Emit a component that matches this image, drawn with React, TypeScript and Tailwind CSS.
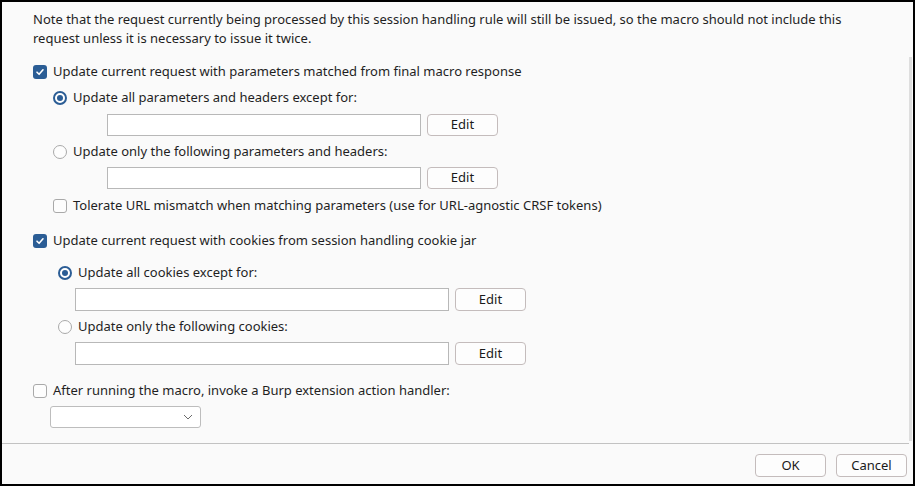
import React from 'react';

const font = { fontFamily: '"Noto Sans", "Open Sans", sans-serif' };

const CheckBox: React.FC<{ checked?: boolean }> = ({ checked }) =>
    checked ? (
        <span className="flex h-[14px] w-[14px] shrink-0 items-center justify-center rounded-[3px] bg-[#2b5d95]">
            <svg width="10" height="10" viewBox="0 0 10 10" fill="none">
                <path d="M2 5.2 L4.1 7.3 L8 2.8" stroke="white" strokeWidth="1.6" strokeLinecap="round" strokeLinejoin="round" />
            </svg>
        </span>
    ) : (
        <span className="h-[14px] w-[14px] shrink-0 rounded-[3px] border border-[#a9a9a9] bg-[#fdfdfd]" />
    );

const Radio: React.FC<{ checked?: boolean }> = ({ checked }) =>
    checked ? (
        <span className="flex h-[14px] w-[14px] shrink-0 items-center justify-center rounded-full border-[2px] border-[#2b5d95] bg-white">
            <span className="h-[6px] w-[6px] rounded-full bg-[#2b5d95]" />
        </span>
    ) : (
        <span className="h-[14px] w-[14px] shrink-0 rounded-full border border-[#a9a9a9] bg-[#fdfdfd]" />
    );

const Row: React.FC<{ control: React.ReactNode; label: string; className?: string }> = ({ control, label, className }) => (
    <div className={`flex h-[20px] items-center gap-[6px] ${className ?? ''}`}>
        {control}
        <span className="whitespace-nowrap">{label}</span>
    </div>
);

const Button: React.FC<{ label: string; className?: string }> = ({ label, className }) => (
    <div className={`flex items-center justify-center rounded-[4px] border border-[#c4bcbc] bg-[#fdfdfd] text-[#1a1a1a] ${className ?? ''}`}>
        {label}
    </div>
);

const Field: React.FC<{ inputW: string; className?: string; tall?: boolean }> = ({ inputW, className, tall }) => (
    <div className={`flex gap-[6px] ${tall ? 'h-[23px]' : 'h-[22px]'} ${className ?? ''}`}>
        <div className={`h-full border border-[#b8b8b8] bg-white ${inputW}`} />
        <Button label="Edit" className="h-full w-[71px]" />
    </div>
);

export default function App() {
    return (
        <div
            style={font}
            className="relative flex h-[486px] w-[915px] flex-col border-2 border-black bg-[#fafafa] text-[13px] text-[#1f1f1f]"
        >
            <div className="flex flex-1 flex-col pl-[31px] pt-[8px]">
                <p className="leading-[19px]">
                    Note that the request currently being processed by this session handling rule will still be issued, so the macro should not include this
                    <br />
                    request unless it is necessary to issue it twice.
                </p>

                <Row className="mt-[14px]" control={<CheckBox checked />} label="Update current request with parameters matched from final macro response" />
                <div className="pl-[20px]">
                    <Row className="mt-[6px]" control={<Radio checked />} label="Update all parameters and headers except for:" />
                    <Field className="ml-[54px] mt-[6px]" inputW="w-[314px]" />
                    <Row className="mt-[6px]" control={<Radio />} label="Update only the following parameters and headers:" />
                    <Field className="ml-[54px] mt-[5px]" inputW="w-[314px]" />
                    <Row className="mt-[7px]" control={<CheckBox />} label="Tolerate URL mismatch when matching parameters (use for URL-agnostic CRSF tokens)" />
                </div>

                <Row className="mt-[15px]" control={<CheckBox checked />} label="Update current request with cookies from session handling cookie jar" />
                <div>
                    <Row className="ml-[25px] mt-[12px]" control={<Radio checked />} label="Update all cookies except for:" />
                    <Field className="ml-[42px] mt-[5px]" inputW="w-[374px]" tall />
                    <Row className="ml-[25px] mt-[6px]" control={<Radio />} label="Update only the following cookies:" />
                    <Field className="ml-[42px] mt-[5px]" inputW="w-[374px]" tall />
                </div>

                <Row className="mt-[16px]" control={<CheckBox />} label="After running the macro, invoke a Burp extension action handler:" />
                <div className="ml-[17px] mt-[5px] flex h-[22px] w-[151px] items-center justify-end rounded-[3px] border border-[#bdbdbd] bg-white pr-[7px]">
                    <svg width="10" height="6" viewBox="0 0 10 6" fill="none">
                        <path d="M1 1 L5 5 L9 1" stroke="#6b6b6b" strokeWidth="1" />
                    </svg>
                </div>
            </div>

            <div className="mr-[4px] h-px bg-[#c2c2c2]" />
            <div className="flex h-[40px] items-start justify-end gap-[10px] pr-[6px] pt-[10px]">
                <Button label="OK" className="h-[23px] w-[71px]" />
                <Button label="Cancel" className="h-[23px] w-[71px]" />
            </div>

            <div className="absolute right-[1px] top-[55px] h-[384px] w-[3px] bg-[#dedede]" />
        </div>
    );
}
